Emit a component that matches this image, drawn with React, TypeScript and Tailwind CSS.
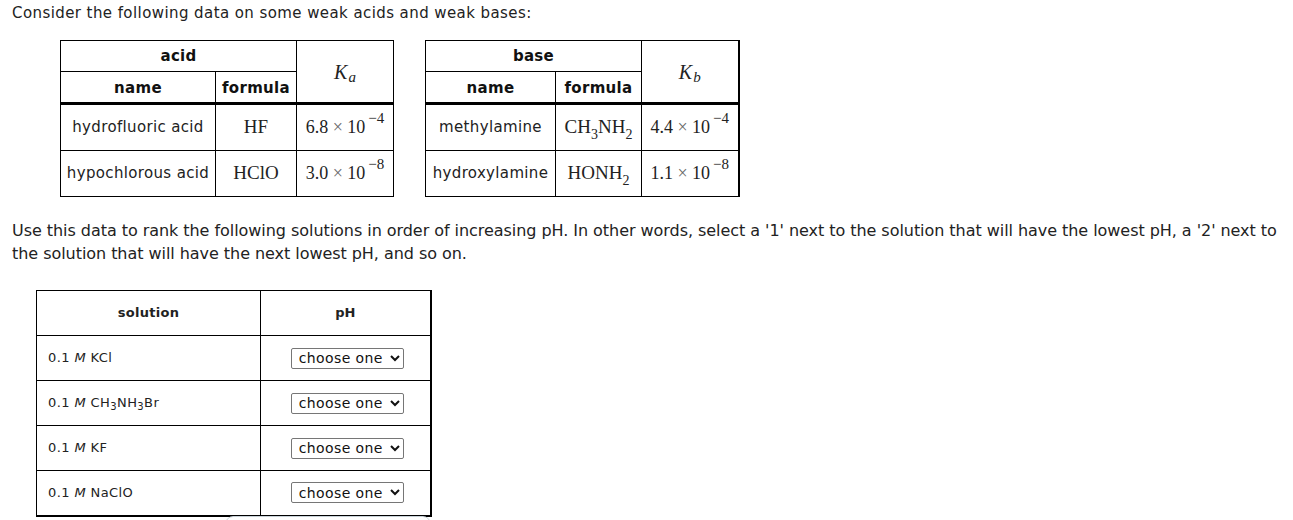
import React from "react"

const verdana = "font-['DejaVu_Sans',Verdana,sans-serif]"
const serif = "font-['Liberation_Serif',serif]"

const Sci = ({ m, e }: { m: string; e: string }) => (
  <span className={`${serif} text-[18px] text-[#222] whitespace-nowrap`}>
    {m} <span className="text-[#666]">×</span> 10
    <span className="relative -top-[10px] ml-[3px] text-[15px]">−{e}</span>
  </span>
)

const acids = [
  { name: "hydrofluoric acid", formula: <>HF</>, k: <Sci m="6.8" e="4" /> },
  { name: "hypochlorous acid", formula: <>HClO</>, k: <Sci m="3.0" e="8" /> },
]

const bases = [
  {
    name: "methylamine",
    formula: (
      <>
        CH<sub className="text-[14px] relative top-[6px]">3</sub>NH<sub className="text-[14px] relative top-[6px]">2</sub>
      </>
    ),
    k: <Sci m="4.4" e="4" />,
  },
  {
    name: "hydroxylamine",
    formula: (
      <>
        HONH<sub className="text-[14px] relative top-[6px]">2</sub>
      </>
    ),
    k: <Sci m="1.1" e="8" />,
  },
]

const solutions = [
  { label: <>KCl</> },
  {
    label: (
      <>
        CH<sub className="text-[10px]">3</sub>NH<sub className="text-[10px]">3</sub>Br
      </>
    ),
  },
  { label: <>KF</> },
  { label: <>NaClO</> },
]

const DataTable = ({
  title,
  kSym,
  rows,
  widths,
  thickRight,
}: {
  title: string
  kSym: string
  rows: { name: string; formula: React.ReactNode; k: React.ReactNode }[]
  widths: string[]
  thickRight?: boolean
}) => (
  <table className={`border-collapse border border-black ${thickRight ? "border-r-2" : ""}`}>
    <thead>
      <tr className="h-[31px]">
        <th colSpan={2} className="border border-black text-[15px] tracking-[0.3px] font-bold text-[#111] leading-none">
          {title}
        </th>
        <th rowSpan={2} className={`border border-black ${widths[2]} text-center`}>
          <span className={`${serif} italic font-normal text-[20px] text-[#222]`}>
            K<sub className="text-[15px] italic ml-[1px]">{kSym}</sub>
          </span>
        </th>
      </tr>
      <tr className="h-[32px]">
        <th className={`border border-black border-b-[3px] ${widths[0]} pt-[3px] text-[15px] tracking-[0.3px] font-bold text-[#111]`}>
          name
        </th>
        <th className={`border border-black border-b-[3px] ${widths[1]} pt-[3px] text-[15px] tracking-[0.3px] font-bold text-[#111]`}>
          formula
        </th>
      </tr>
    </thead>
    <tbody>
      {rows.map((r, i) => (
        <tr key={i} className={i === 0 ? "h-[47px] border-t-[3px] border-black" : "h-[46px]"}>
          <td className="border border-black text-center text-[15px] tracking-[0.35px] text-[#222] whitespace-nowrap px-1">
            {r.name}
          </td>
          <td className={`border border-black text-center ${serif} text-[19px] text-[#222] whitespace-nowrap`}>{r.formula}</td>
          <td className="border border-black text-center px-1">{r.k}</td>
        </tr>
      ))}
    </tbody>
  </table>
)

export default function App() {
  return (
    <div className={`${verdana} bg-white w-[1293px] h-[520px] overflow-hidden text-[#222] relative`}>
      <p className="pl-3 pt-[3px] text-[15px] tracking-[0.42px] leading-[20px]">
        Consider the following data on some weak acids and weak bases:
      </p>

      <div className="flex gap-[31px] pl-[60px] pt-[17px]">
        <DataTable title="acid" kSym="a" rows={acids} widths={["w-[155px]", "w-[81px]", "w-[97px]"]} />
        <DataTable title="base" kSym="b" rows={bases} widths={["w-[130px]", "w-[86px]", "w-[97px]"]} thickRight />
      </div>

      <p className="pl-3 w-[1288px] pt-[22px] text-[16px] tracking-[-0.05px] leading-[23px]">
        Use this data to rank the following solutions in order of increasing pH. In other words, select a '1' next to the
        solution that will have the lowest pH, a '2' next to the solution that will have the next lowest pH, and so on.
      </p>

      <div className="pl-[36px] pt-[25px]">
        <table className="border-collapse border border-black border-r-2 border-b-2 text-[13px]">
          <thead>
            <tr className="h-[45px]">
              <th className="border border-black w-[224px] font-bold text-[13px] tracking-[0.3px]">solution</th>
              <th className="border border-black w-[170px] font-bold text-[13px]">pH</th>
            </tr>
          </thead>
          <tbody>
            {solutions.map((s, i) => (
              <tr key={i} className="h-[45px]">
                <td className="border border-black pl-[11px] text-left tracking-[0.4px]">
                  0.1 <i>M</i> {s.label}
                </td>
                <td className="border border-black text-center pl-[4px]">
                  <select className="h-[21px] w-[113px] border border-[#767676] rounded-[2px] bg-white text-[14px] tracking-[0.4px] pl-[3px] text-[#111]">
                    <option>choose one</option>
                  </select>
                </td>
              </tr>
            ))}
          </tbody>
        </table>
      </div>

      <div className="absolute left-[225px] top-[516px] w-[206px] h-[20px] border border-[#c8d2d8] rounded-[8px]" />
    </div>
  )
}
